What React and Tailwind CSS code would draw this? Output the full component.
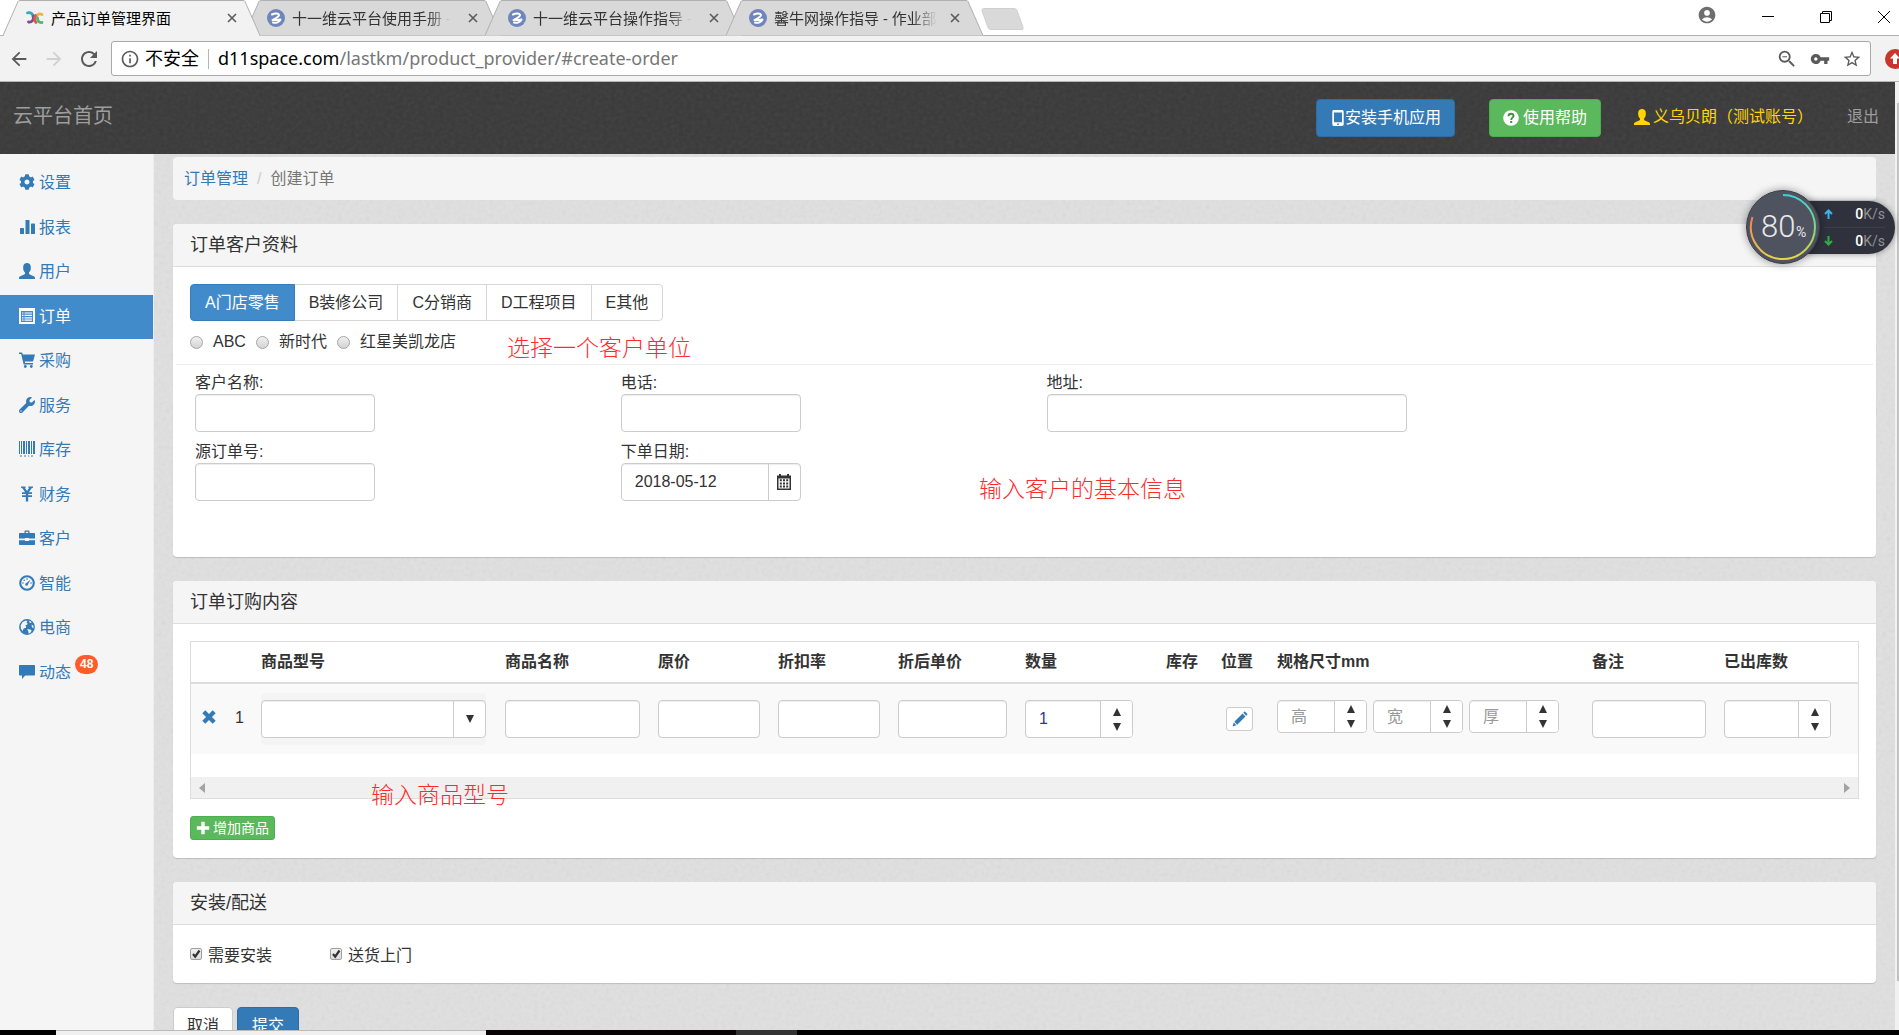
import { useState } from 'react'
import {
  MdArrowBack,
  MdArrowForward,
  MdRefresh,
  MdInfoOutline,
  MdStarBorder,
  MdVpnKey,
  MdAccountCircle,
  MdZoomOut,
} from 'react-icons/md'
import { FaCog, FaWrench } from 'react-icons/fa'

// ─── Icons ────────────────────────────────
function StatsIcon() {
  return (
    <svg viewBox="0 0 16 16" className="size-4" fill="currentColor">
      <rect x="1" y="9" width="4" height="6" rx="0.6" />
      <rect x="6.5" y="1" width="4" height="14" rx="0.6" />
      <rect x="12" y="4.5" width="4" height="10.5" rx="0.6" />
    </svg>
  )
}

function UserIcon() {
  return (
    <svg viewBox="0 0 16 16" className="size-4" fill="currentColor">
      <path d="M8 0C5.8 0 4.2 1.5 4.2 3.8v1.8c0 1.6.8 3 1.8 3.9v1.1c0 .5-.3.8-.8 1L1.3 13.3C.4 13.7 0 14.2 0 15v1h16v-1c0-.8-.4-1.3-1.3-1.700l-3.900-1.700c-.5-.2-.8-.5-.8-1V9.500c1-.9 1.800-2.300 1.800-3.900V3.800C11.800 1.500 10.200 0 8 0z" />
    </svg>
  )
}

function ListIcon() {
  return (
    <svg viewBox="0 0 16 16" className="size-4">
      <path fill="currentColor" fillRule="evenodd" d="M0 0h16v16H0zM2 3v11h12V3z" />
      <path stroke="currentColor" strokeWidth="1.2" d="M3 5h1.500M5.500 5H13M3 7.400h1.500M5.500 7.400H13M3 9.800h1.500M5.500 9.800H13M3 12.200h1.500M5.500 12.200H13" />
    </svg>
  )
}

function CartIcon() {
  return (
    <svg viewBox="0 0 16 16" className="size-4" fill="currentColor">
      <path d="M0 .4h2.600c.4 0 .7.2.8.6l.4 1.400H16l-1.700 6.400c-.1.500-.4.700-.9.700H5.700l.4 1.500H14v1.500H5.200c-.4 0-.6-.2-.7-.6L2.200 1.900H0z" />
      <circle cx="6.300" cy="14.500" r="1.400" />
      <circle cx="12.300" cy="14.500" r="1.400" />
    </svg>
  )
}

function BarcodeIcon() {
  return (
    <svg viewBox="0 0 16 16" className="size-4" fill="currentColor">
      <path d="M0 0h1v13H0zM2 0h1v13H2zM4 0h2v13H4zM7 0h1v13H7zM9 0h2v13H9zM12 0h1v13h-1zM14 0h2v13h-2zM1 14.500h2v1H1zM5 14.500h2v1H5zM9 14.500h1v1H9zM12 14.500h2v1h-2z" />
    </svg>
  )
}

function YenIcon() {
  return (
    <svg viewBox="0 0 16 16" className="size-4" fill="currentColor">
      <path d="M2 .5h4.600v1.200l-.6.3L8 5l2-3-.6-.3V.5H14v1.200l-1.400.6L9.900 6.200H13v1.700H9.200v1.300H13v1.700H9.200v4.600H6.800v-4.600H3V9.200h3.800V7.900H3V6.200h3.100L3.400 2.300 2 1.700z" />
    </svg>
  )
}

function BriefcaseIcon() {
  return (
    <svg viewBox="0 0 16 16" className="size-4" fill="currentColor">
      <path d="M5.500 3V1.500c0-.6.4-1 1-1h3c.6 0 1 .4 1 1V3H15c.6 0 1 .4 1 1v4.500h-6V8H6v.5H0V4c0-.6.4-1 1-1zM6.800 1.800V3h2.400V1.800zM0 10.200h6v.8h4v-.8h6v3.800c0 .6-.4 1-1 1H1c-.6 0-1-.4-1-1z" />
    </svg>
  )
}

function DashboardIcon() {
  return (
    <svg viewBox="0 0 16 16" className="size-4">
      <circle cx="8" cy="8" r="6.800" fill="none" stroke="currentColor" strokeWidth="2.100" />
      <g fill="currentColor">
        <circle cx="3.900" cy="8" r=".8" />
        <circle cx="5.200" cy="5.200" r=".8" />
        <circle cx="8" cy="4" r=".8" />
        <circle cx="12.100" cy="8" r=".8" />
        <path d="M11.600 4.600 9 9.300a1.400 1.400 0 1 1-1.500-1.300z" />
      </g>
    </svg>
  )
}

function GlobeIcon() {
  return (
    <svg viewBox="0 0 16 16" className="size-4">
      <circle cx="8" cy="8" r="7.900" fill="currentColor" />
      <path fill="#f5f5f5" d="M7 1.500l1.500.8L7.400 3.600l1.200.6-.5 1.600-1.900.6 1 1.200-.4 1.500-1.700.2-1.200 1.500.2 1.700L2 10 1.600 6.500 3.500 3zM10.300 1.500l2.300 1.400-.6 1.200-1.600-.6zM8.200 10l3 .4 1.500 1-1 2-2 1.300-.4-2.100zM12.600 5.400l1.900 1.300v2.500l-1.600-1z" />
    </svg>
  )
}

function CommentIcon() {
  return (
    <svg viewBox="0 0 16 16" className="size-4" fill="currentColor">
      <path d="M1 1h14c.6 0 1 .4 1 1v8.500c0 .6-.4 1-1 1H6.200L3 15v-3.500H1c-.6 0-1-.4-1-1V2c0-.6.4-1 1-1z" />
    </svg>
  )
}

function PhoneIcon() {
  return (
    <svg viewBox="0 0 12 16" className="h-4 w-3">
      <path fill="currentColor" fillRule="evenodd" d="M2 0h8c1 0 1.700.7 1.700 1.700v12.600c0 1-.7 1.700-1.700 1.700H2c-1 0-1.700-.7-1.700-1.700V1.700C.3.700 1 0 2 0zm0 2.500v9.700h8V2.500zM6 13.300a.9.900 0 1 0 0 1.800.9.900 0 0 0 0-1.800z" />
    </svg>
  )
}

function QuestionIcon() {
  return (
    <svg viewBox="0 0 16 16" className="size-4">
      <circle cx="8" cy="8" r="7.800" fill="currentColor" />
      <path fill="none" stroke="#3f8f3f" strokeWidth="1.900" d="M5.500 6.300c0-1.500 1-2.500 2.500-2.500s2.500.9 2.500 2.100c0 1.800-2.300 1.700-2.300 4" />
      <rect x="7.200" y="11" width="2" height="2" fill="#3f8f3f" />
    </svg>
  )
}

function RemoveIcon() {
  return (
    <svg viewBox="0 0 14 14" className="size-[14px]">
      <path stroke="currentColor" strokeWidth="4.200" d="m1.800 1.800 10.400 10.400M12.200 1.800 1.800 12.200" />
    </svg>
  )
}

function PlusIcon() {
  return (
    <svg viewBox="0 0 14 14" className="size-[14px]" fill="currentColor">
      <path d="M5.300.8h3.400v4.500h4.500v3.400H8.700v4.500H5.300V8.700H.8V5.300h4.500z" />
    </svg>
  )
}

function PencilIcon() {
  return (
    <svg viewBox="0 0 16 16" className="size-4" fill="currentColor">
      <path d="m13.200.8 2 2c.3.300.3.600 0 .9l-1 1-2.900-2.900 1-1c.3-.3.600-.3.900 0zM10.600 2.500l2.900 2.900-8.300 8.300-2.900-2.900zM1.700 11.600l2.700 2.700-3.800 1.100z" />
    </svg>
  )
}

function CalendarIcon() {
  return (
    <svg viewBox="0 0 14 16" className="h-4 w-[14px]">
      <path fill="#333" fillRule="evenodd" d="M0 1.500h2V0h2v1.500h6V0h2v1.500h2V16H0zM1.500 4.500v10h11v-10z" />
      <path stroke="#333" strokeWidth="2" strokeDasharray="2 1.200" d="M2.800 6.300h9M2.800 9.400h9M2.800 12.500h9" />
    </svg>
  )
}

function SpaceLogo() {
  return (
    <svg viewBox="0 0 18 16" className="h-4 w-[18px]" fill="none" strokeWidth="2.800" strokeLinecap="round">
      <path stroke="#3aa6b9" d="M1.500 2.800c3-.5 5.500.5 5.500 4" />
      <path stroke="#7a4b9a" d="M7.500 6c.5 4-1.500 6.500-5 6" />
      <path stroke="#e9b44c" d="M16 4.500c-3-1.500-5 0-5.500 2.500" />
      <path stroke="#e4554d" d="M9.500 5.500C8 9 8.500 11 10 12.500" />
      <path stroke="#56b66b" d="M11.500 8c0 3 1.500 5 4.500 4.500" />
    </svg>
  )
}

function DocLogo() {
  return (
    <svg viewBox="0 0 18 18" className="size-[18px]">
      <circle cx="9" cy="9" r="9" fill="#6f86bd" />
      <path fill="none" stroke="#fff" strokeWidth="2" strokeLinecap="round" strokeLinejoin="round" d="M5 5.500c2.500-1.300 6.500-1.500 7 .3.500 2-3 3.200-6.500 5.200 2-.3 6 .3 8-.5-1.200 2.500-4.500 4-7.500 3" />
    </svg>
  )
}

// subtle paper grain behind the panels
function Grain({ id, opacity }) {
  return (
    <svg className="pointer-events-none absolute inset-0 size-full" style={{ opacity }} aria-hidden="true">
      <filter id={id}>
        <feTurbulence type="fractalNoise" baseFrequency="0.25" numOctaves="3" stitchTiles="stitch" />
        <feColorMatrix type="saturate" values="0" />
      </filter>
      <rect width="100%" height="100%" filter={`url(#${id})`} />
    </svg>
  )
}

// ─── Data ────────────────────────────────
const tabs = [
  { title: '产品订单管理界面', active: true },
  { title: '十一维云平台使用手册 -' },
  { title: '十一维云平台操作指导 -' },
  { title: '馨牛网操作指导 - 作业部' },
]

const menu = [
  { label: '设置', icon: <FaCog className="size-4" /> },
  { label: '报表', icon: <StatsIcon /> },
  { label: '用户', icon: <UserIcon /> },
  { label: '订单', icon: <ListIcon />, active: true },
  { label: '采购', icon: <CartIcon /> },
  { label: '服务', icon: <FaWrench className="size-4" /> },
  { label: '库存', icon: <BarcodeIcon /> },
  { label: '财务', icon: <YenIcon /> },
  { label: '客户', icon: <BriefcaseIcon /> },
  { label: '智能', icon: <DashboardIcon /> },
  { label: '电商', icon: <GlobeIcon /> },
  { label: '动态', icon: <CommentIcon />, badge: 48 },
]

const customerTypes = ['A门店零售', 'B装修公司', 'C分销商', 'D工程项目', 'E其他']
const customers = ['ABC', '新时代', '红星美凯龙店']

const columns = [
  { label: '', width: 'w-[35px]' },
  { label: '', width: 'w-[26px]' },
  { label: '商品型号', width: 'w-[244px]' },
  { label: '商品名称', width: 'w-[153px]' },
  { label: '原价', width: 'w-[120px]' },
  { label: '折扣率', width: 'w-[120px]' },
  { label: '折后单价', width: 'w-[127px]' },
  { label: '数量', width: 'w-[141px]' },
  { label: '库存', width: 'w-[55px]' },
  { label: '位置', width: 'w-[56px]' },
  { label: '规格尺寸mm', width: 'w-[315px]' },
  { label: '备注', width: 'w-[132px]' },
  { label: '已出库数', width: '' },
]

const inputBox = 'rounded border border-[#ccc] bg-white shadow-[inset_0_1px_1px_rgba(0,0,0,0.075)]'

// ─── Browser chrome ────────────────────────────────
function BrowserTab({ title, active }) {
  return (
    <div className={`relative -mr-4 h-9 w-[257px] ${active ? 'z-10' : ''}`}>
      <svg viewBox="0 0 257 36" className="absolute inset-0 size-full" preserveAspectRatio="none">
        <path
          d="M0 35.500 15 1.500Q15.500.5 17 .5H240Q241.500.5 242 1.500L257 35.500"
          fill={active ? '#f2f2f2' : '#d9d9d9'}
          stroke="#b0b0b0"
        />
        {active && <path d="M1 35.500H256" stroke="#f2f2f2" strokeWidth="2" />}
      </svg>
      <div className="relative flex h-9 items-center pr-[23px] pl-[23px]">
        {active ? <SpaceLogo /> : <DocLogo />}
        <span className={`ml-[7px] text-[15px] whitespace-nowrap ${active ? 'text-black' : 'mask-r-from-85% text-[#333]'}`}>
          {title}
        </span>
        <button aria-label="关闭标签页" className="ml-auto text-[#5a5a5a]">
          <svg viewBox="0 0 10 10" className="size-[10px]">
            <path stroke="currentColor" strokeWidth="1.600" d="m1 1 8 8M9 1 1 9" />
          </svg>
        </button>
      </div>
    </div>
  )
}

function BrowserChrome() {
  return (
    <header className="font-['Noto_Sans','Noto_Sans_CJK_SC',sans-serif]">
      <div className="flex h-9 bg-white pl-[3px] shadow-[inset_0_-1px_0_#b0b0b0]">
        {tabs.map((tab) => (
          <BrowserTab key={tab.title} {...tab} />
        ))}
        <button aria-label="新标签页" className="ml-[14px] self-center pt-[2px]">
          <svg viewBox="0 0 44 22" className="h-[22px] w-11">
            <path d="M3 .5h30q2 0 3 2l6 17q.5 2-1 2H10q-2 0-3-2L1 3q-.5-2.500 2-2.500z" fill="#d9d9d9" stroke="#cfcfcf" />
          </svg>
        </button>
        <div className="ml-auto flex items-start gap-[44px] pr-2 text-black">
          <button aria-label="账户" className="pt-[5px] text-[#6e6e6e]">
            <MdAccountCircle className="size-[20px]" />
          </button>
          <button aria-label="最小化" className="pt-[10px]">
            <svg viewBox="0 0 14 14" className="size-[14px]"><path stroke="currentColor" d="M1 6.500h12" /></svg>
          </button>
          <button aria-label="还原" className="pt-[10px]">
            <svg viewBox="0 0 14 14" className="size-[14px]" fill="none" stroke="currentColor">
              <path d="M1.500 3.500h9v9h-9zM3.500 3.500v-2h9v9h-2" />
            </svg>
          </button>
          <button aria-label="关闭" className="pt-[10px]">
            <svg viewBox="0 0 14 14" className="size-[14px]"><path stroke="currentColor" d="m1 1 12 12M13 1 1 13" /></svg>
          </button>
        </div>
      </div>
      <div className="flex h-[46px] items-center overflow-hidden border-b border-[#b6b4b6] bg-[#f2f2f2] pl-2 text-[#5a5a5a]">
        <button aria-label="后退"><MdArrowBack className="size-[22px]" /></button>
        <button aria-label="前进" className="ml-[13px] text-[#d0d0d0]"><MdArrowForward className="size-[22px]" /></button>
        <button aria-label="刷新" className="ml-3"><MdRefresh className="size-6" /></button>
        <div className="ml-[10px] flex h-[35px] min-w-0 flex-1 items-center rounded-[3px] border border-[#a9a9a9] bg-white px-2">
          <MdInfoOutline className="size-5 shrink-0" />
          <span className="ml-[5px] text-[18px] whitespace-nowrap text-black">不安全</span>
          <span className="ml-[9px] h-5 w-px bg-[#b5b5b5]" />
          <a href="#create-order" className="ml-[9px] flex-1 truncate text-[18px] text-[#777]">
            <span className="text-black">d11space.com</span>/lastkm/product_provider/#create-order
          </a>
          <div className="flex items-center gap-3">
            <MdZoomOut className="size-[22px]" />
            <MdVpnKey className="size-5" />
            <MdStarBorder className="size-5" />
          </div>
        </div>
        <div className="-mr-[6px] ml-[14px]">
          <svg viewBox="0 0 20 20" className="size-5">
            <circle cx="10" cy="10" r="10" fill="#c9372c" />
            <path fill="#fff" d="m10 4 5 5.500h-3V15H8V9.500H5z" />
          </svg>
        </div>
      </div>
    </header>
  )
}

// ─── Page parts ────────────────────────────────
function TopBar() {
  return (
    <nav className="relative flex h-[72px] items-center bg-[#393939] pr-4 pl-[13px]">
      <Grain id="grain-dark" opacity={0.08} />
      <a href="#home" className="relative pb-1 text-[20px] leading-6 text-[#9d9d9d]">云平台首页</a>
      <div className="relative ml-auto flex items-center text-base">
        <button className="flex h-[38px] items-center rounded border border-[#2e6da4] bg-[#337ab7] px-[13px] text-white">
          <span className="mr-px ml-[2px]"><PhoneIcon /></span>
          安装手机应用
        </button>
        <button className="ml-[34px] flex h-[38px] items-center gap-1 rounded border border-[#4cae4c] bg-[#5cb85c] px-[13px] text-white">
          <QuestionIcon />
          使用帮助
        </button>
        <a href="#account" className="ml-[33px] flex items-center gap-[3px] pb-[3px] text-[#ffd600]">
          <UserIcon />
          义乌贝朗（测试账号）
        </a>
        <a href="#logout" className="ml-[34px] pb-[3px] text-[#9d9d9d]">退出</a>
      </div>
    </nav>
  )
}

function Sidebar() {
  return (
    <aside className="w-[154px] shrink-0 border-r border-[#eee] bg-[#f5f5f5] pt-[7px]">
      <ul className="flex h-[534px] flex-col">
        {menu.map((item) => (
          <li key={item.label} className="flex-1">
            <a
              href={`#${item.label}`}
              className={`flex h-full items-center gap-1 pl-[19px] text-base ${
                item.active ? 'bg-[#428bca] text-white' : 'text-[#337ab7]'
              }`}
            >
              <span className="pb-[2px]">{item.icon}</span>
              {item.label}
              {item.badge && (
                <span className="mb-4 rounded-full bg-[#ff5b2d] px-[5px] text-[12px] leading-[19px] font-bold text-white">
                  {item.badge}
                </span>
              )}
            </a>
          </li>
        ))}
      </ul>
    </aside>
  )
}

function Panel({ title, children }) {
  return (
    <section className="relative mb-6 rounded bg-white shadow-[0_1px_1px_rgba(0,0,0,0.15)]">
      <h3 className="h-[43px] rounded-t border-b border-[#ddd] bg-[#f5f5f5] px-[17px] text-[18px] leading-[42px] text-[#333]">{title}</h3>
      {children}
    </section>
  )
}

function Field({ id, label, width, children }) {
  return (
    <div className="pl-[22px]">
      <label htmlFor={id} className="block h-[22px] text-base leading-[22px]">{label}</label>
      {children || <input id={id} className={`block h-[38px] ${inputBox} ${width} px-3`} />}
    </div>
  )
}

function Spinner({ label, defaultValue, placeholder, width, height }) {
  return (
    <div className={`flex overflow-hidden ${inputBox} ${width} ${height}`}>
      <input
        aria-label={label}
        defaultValue={defaultValue}
        placeholder={placeholder}
        className="min-w-0 flex-1 pl-[13px] text-base text-[#339] outline-none placeholder:text-[#999]"
      />
      <div className="flex w-8 shrink-0 flex-col items-center justify-center gap-[7px] border-l border-[#ccc] bg-white text-[#333]">
        <button aria-label={`${label}增加`}>
          <svg viewBox="0 0 8 8" className="block size-2" fill="currentColor"><path d="M4 0l4 8H0z" /></svg>
        </button>
        <button aria-label={`${label}减少`}>
          <svg viewBox="0 0 8 8" className="block size-2" fill="currentColor"><path d="M4 8 0 0h8z" /></svg>
        </button>
      </div>
    </div>
  )
}

function TickBox({ label }) {
  const [checked, setChecked] = useState(true)
  return (
    <label className="flex items-center gap-[6px] text-base">
      <span className="relative mb-1 size-3">
        <input
          type="checkbox"
          checked={checked}
          onChange={() => setChecked(!checked)}
          className="block size-3 appearance-none rounded-[2px] border border-[#a0a0a0] bg-linear-to-b from-[#f0f0f0] to-[#dcdcdc]"
        />
        {checked && (
          <svg viewBox="0 0 12 12" className="pointer-events-none absolute inset-0 size-3">
            <path fill="none" stroke="#333" strokeWidth="2.200" d="m3 6 2.200 2.700L9.500 2.500" />
          </svg>
        )}
      </span>
      {label}
    </label>
  )
}

function Note({ place, children }) {
  return (
    <p className={`pointer-events-none absolute z-10 text-[23px] leading-7 font-light whitespace-nowrap text-[#ff2a2a] ${place}`}>
      {children}
    </p>
  )
}

function CustomerPanel() {
  const [type, setType] = useState(customerTypes[0])
  return (
    <Panel title="订单客户资料">
      <div className="min-h-[290px] pt-[17px]">
        <div className="ml-[17px] flex">
          {customerTypes.map((t) => (
            <button
              key={t}
              onClick={() => setType(t)}
              className={`-mr-px h-[37px] border px-[14px] text-base first:rounded-l last:rounded-r ${
                t === type ? 'relative border-[#357ebd] bg-[#428bca] text-white' : 'border-[#d6d6d6] bg-white text-[#333]'
              }`}
            >
              {t}
            </button>
          ))}
        </div>
        <div className="mt-[9px] ml-[17px] flex h-6 items-center gap-[10px]">
          {customers.map((c) => (
            <label key={c} className="flex items-center gap-[10px] text-base">
              <input
                type="radio"
                name="customer"
                className="size-[13px] appearance-none rounded-full border border-[#a6a6a6] bg-linear-to-b from-[#f0f0f0] to-[#d4d4d4] checked:border-4 checked:border-[#555]"
              />
              {c}
            </label>
          ))}
        </div>
        <hr className="mx-[3px] mt-[10px] border-[#eee]" />
        <div className="mt-[7px] grid grid-cols-4 gap-y-[9px]">
          <Field id="name" label="客户名称:" width="w-[180px]" />
          <Field id="phone" label="电话:" width="w-[180px]" />
          <div className="col-span-2">
            <Field id="address" label="地址:" width="w-[360px]" />
          </div>
          <Field id="source" label="源订单号:" width="w-[180px]" />
          <Field id="date" label="下单日期:">
            <div className={`flex h-[38px] w-[180px] ${inputBox}`}>
              <input id="date" defaultValue="2018-05-12" className="min-w-0 flex-1 px-[13px] text-base outline-none" />
              <button type="button" aria-label="选择日期" className="flex w-8 items-center justify-center border-l border-[#ccc]">
                <CalendarIcon />
              </button>
            </div>
          </Field>
        </div>
      </div>
      <Note place="top-[110px] left-[334px]">选择一个客户单位</Note>
      <Note place="top-[251px] left-[806px]">输入客户的基本信息</Note>
    </Panel>
  )
}

function OrderTable() {
  return (
    <table className="w-full min-w-[1660px] table-fixed text-left text-base">
      <thead>
        <tr className="h-[41px] border-b-2 border-[#ddd]">
          {columns.map((col, i) => (
            <th key={i} scope="col" className={`px-[9px] pb-2 align-bottom leading-6 font-bold whitespace-nowrap ${col.width}`}>
              {col.label}
            </th>
          ))}
        </tr>
      </thead>
      <tbody>
        <tr className="h-[71px] bg-[#f9f9f9] align-top [&>td]:px-[9px] [&>td]:pt-4">
          <td>
            <button aria-label="删除" className="mt-[10px] block pl-[2px] text-[#337ab7]"><RemoveIcon /></button>
          </td>
          <td className="leading-[36px] font-medium">1</td>
          <td>
            <div className="-mt-[7px] w-[225px] rounded bg-[#f4f4f4] py-[7px]">
              <div className={`flex h-[38px] ${inputBox}`}>
                <input aria-label="商品型号" className="min-w-0 flex-1 px-3 outline-none" />
                <button aria-label="展开" className="flex w-8 items-center justify-center border-l border-[#ccc]">
                  <svg viewBox="0 0 8 8" className="size-2" fill="#333"><path d="M4 8 0 0h8z" /></svg>
                </button>
              </div>
            </div>
          </td>
          <td><input aria-label="商品名称" className={`h-[38px] w-full px-3 ${inputBox}`} /></td>
          <td><input aria-label="原价" className={`h-[38px] w-full px-3 ${inputBox}`} /></td>
          <td><input aria-label="折扣率" className={`h-[38px] w-full px-3 ${inputBox}`} /></td>
          <td><input aria-label="折后单价" className={`h-[38px] w-full px-3 ${inputBox}`} /></td>
          <td><Spinner label="数量" defaultValue="1" width="w-[108px]" height="h-[38px]" /></td>
          <td></td>
          <td>
            <button aria-label="编辑位置" className="mt-[7px] ml-[5px] flex h-6 w-[27px] items-center justify-center rounded-[3px] border border-[#ccc] bg-white text-[#337ab7]">
              <PencilIcon />
            </button>
          </td>
          <td>
            <div className="flex gap-[6px]">
              <Spinner label="高" placeholder="高" width="w-[90px]" height="h-[33px]" />
              <Spinner label="宽" placeholder="宽" width="w-[90px]" height="h-[33px]" />
              <Spinner label="厚" placeholder="厚" width="w-[90px]" height="h-[33px]" />
            </div>
          </td>
          <td><input aria-label="备注" className={`h-[38px] w-full px-3 ${inputBox}`} /></td>
          <td><Spinner label="已出库数" width="w-[107px]" height="h-[38px]" /></td>
        </tr>
      </tbody>
    </table>
  )
}

function OrderPanel() {
  return (
    <Panel title="订单订购内容">
      <div className="px-[17px] pt-[17px] pb-[18px]">
        <div className="border border-[#ddd]">
          <div className="overflow-hidden pb-[23px]">
            <OrderTable />
          </div>
          <div className="flex h-[21px] items-center justify-between bg-[#f0f0f0] px-2 text-[#a3a3a3]">
            <button aria-label="向左滚动">
              <svg viewBox="0 0 6 10" className="h-[10px] w-[6px]" fill="currentColor"><path d="M6 0v10L0 5z" /></svg>
            </button>
            <button aria-label="向右滚动">
              <svg viewBox="0 0 6 10" className="h-[10px] w-[6px]" fill="currentColor"><path d="M0 0v10l6-5z" /></svg>
            </button>
          </div>
        </div>
        <button className="mt-[17px] flex h-6 items-center gap-[3px] rounded-[3px] border border-[#4cae4c] bg-[#5cb85c] px-[5px] text-[14px] text-white">
          <PlusIcon />
          增加商品
        </button>
      </div>
      <Note place="top-[200px] left-[198px]">输入商品型号</Note>
    </Panel>
  )
}

function SpeedBall() {
  return (
    <div className="absolute top-[107px] right-0 flex h-[76px] items-center">
      <div className="z-10 -mr-[30px] rounded-full shadow-[0_0_8px_rgba(0,0,0,0.4)]">
        <svg viewBox="0 0 74 74" className="size-[74px]" fill="none">
          <defs>
            <linearGradient id="ring" x1="0" y1="0" x2="0" y2="1">
              <stop offset="0" stopColor="#3fd0d6" />
              <stop offset="0.6" stopColor="#8fd672" />
              <stop offset="1" stopColor="#e8d44a" />
            </linearGradient>
            <linearGradient id="ring-left" x1="0" y1="0" x2="0" y2="1">
              <stop offset="0" stopColor="#f07f5a" />
              <stop offset="1" stopColor="#e8d44a" />
            </linearGradient>
          </defs>
          <circle cx="37" cy="37" r="36.500" fill="#4f535f" stroke="#3a3d46" />
          <path d="M37 5a32 32 0 0 1 0 64" stroke="url(#ring)" strokeWidth="2" />
          <path d="M37 69A32 32 0 0 1 6.500 27" stroke="url(#ring-left)" strokeWidth="2" />
          <text x="15" y="47" fill="#e8e8ea" fontSize="31" fontWeight="300" fontFamily="Roboto">80</text>
          <text x="50" y="47" fill="#e8e8ea" fontSize="14" fontFamily="Roboto">%</text>
        </svg>
      </div>
      <div className="flex h-[53px] w-[105px] flex-col justify-center rounded-r-full bg-[#2f323c] pr-[10px] pl-[34px] font-['Roboto',sans-serif] text-[14px] leading-[26px] text-[#8e9097] shadow-[0_0_6px_rgba(0,0,0,0.4)]">
        <p className="flex items-center justify-between border-b border-[#3c3f49]">
          <svg viewBox="0 0 9 10" className="h-[10px] w-[9px]" fill="none" stroke="#3fb2ee" strokeWidth="2"><path d="M4.500 10V2M1 5l3.500-3.500L8 5" /></svg>
          <span><b className="font-medium text-white">0</b>K/s</span>
        </p>
        <p className="flex items-center justify-between">
          <svg viewBox="0 0 9 10" className="h-[10px] w-[9px]" fill="none" stroke="#2fae45" strokeWidth="2"><path d="M4.500 0v8M1 5l3.500 3.500L8 5" /></svg>
          <span><b className="font-medium text-white">0</b>K/s</span>
        </p>
      </div>
    </div>
  )
}

export default function App() {
  return (
    <div className="flex h-screen flex-col overflow-hidden font-['Liberation_Sans','Noto_Sans_CJK_SC',sans-serif] text-[#333]">
      <BrowserChrome />

      <div className="flex min-h-0 flex-1">
        <div className="relative flex min-w-0 flex-1 flex-col">
          <TopBar />
          <div className="relative flex min-h-0 flex-1 overflow-hidden bg-[#e0e0e0]">
            <Sidebar />
            <main className="relative min-w-0 flex-1 px-[19px] pt-[3px]">
              <Grain id="grain-light" opacity={0.12} />
              <ol className="relative mb-6 flex h-[43px] items-center rounded bg-[#f5f5f5] px-[11px] text-base text-[#777]">
                <li><a href="#orders" className="text-[#337ab7]">订单管理</a></li>
                <li className="px-[9px] text-[#ccc]">/</li>
                <li>创建订单</li>
              </ol>

              <CustomerPanel />
              <OrderPanel />

              <Panel title="安装/配送">
                <div className="flex h-[58px] items-center gap-[58px] px-[17px] pt-1">
                  <TickBox label="需要安装" />
                  <TickBox label="送货上门" />
                </div>
              </Panel>

              <div className="relative flex gap-1 text-base">
                <button className="h-[38px] rounded border border-[#ccc] bg-white px-[13px]">取消</button>
                <button className="h-[38px] rounded border border-[#2e6da4] bg-[#337ab7] px-[14px] text-white">提交</button>
              </div>
            </main>
          </div>
          <SpeedBall />
        </div>

        {/* page scrollbar */}
        <div className="w-1 shrink-0 bg-[#f1f1f1] pt-[21px] pl-[2px]">
          <div className="h-[878px] bg-[#c1c1c1]" />
        </div>
      </div>

      {/* taskbar edge */}
      <footer className="flex h-[5px] shrink-0 bg-black pl-14">
        <div className="w-[430px] border-t border-[#bbb] bg-[#f0f0f0]" />
        <div className="w-[250px] bg-[#0a0305]" />
        <div className="w-[61px] bg-[#333]" />
      </footer>
    </div>
  )
}
